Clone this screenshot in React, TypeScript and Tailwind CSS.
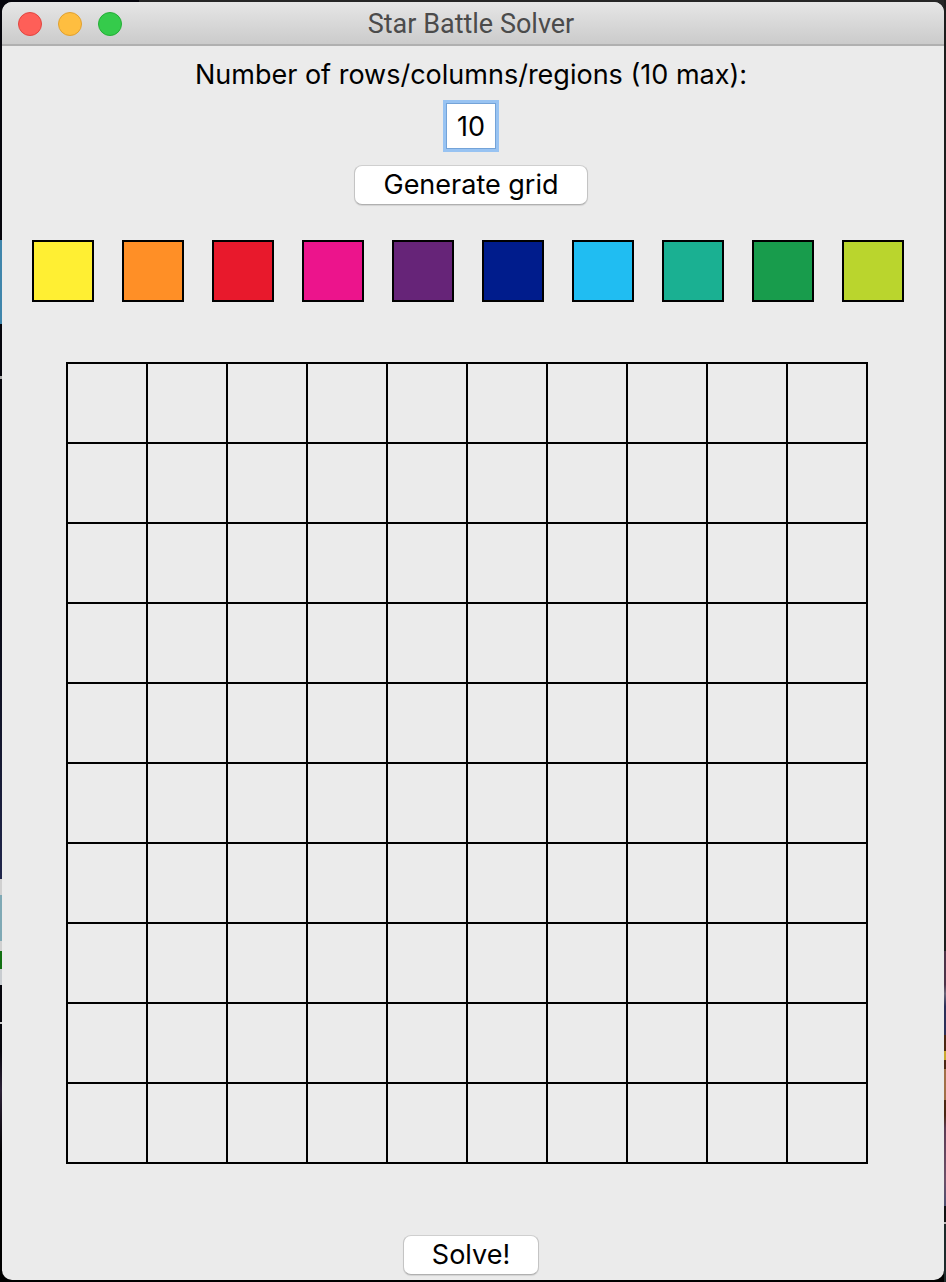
import { useState } from "react";

const SWATCHES = [
  { name: "Yellow", fill: "bg-[#ffef33]" },
  { name: "Orange", fill: "bg-[#ff8f26]" },
  { name: "Red", fill: "bg-[#e8192c]" },
  { name: "Pink", fill: "bg-[#ec148c]" },
  { name: "Purple", fill: "bg-[#662478]" },
  { name: "Navy", fill: "bg-[#001c8c]" },
  { name: "Sky", fill: "bg-[#20bdf2]" },
  { name: "Teal", fill: "bg-[#1ab092]" },
  { name: "Green", fill: "bg-[#189c4c]" },
  { name: "Lime", fill: "bg-[#bad52d]" },
];

const LIGHTS = [
  { name: "Close", look: "bg-[#fe5f58] border-[#e14640]" },
  { name: "Minimize", look: "bg-[#febe40] border-[#e0a030]" },
  { name: "Zoom", look: "bg-[#35cb4b] border-[#24ae36]" },
];

const PUSH_BUTTON =
  "h-10 cursor-default rounded-lg border border-t-[#cfcfcf] border-x-[#c4c4c4] border-b-[#b0b0b0] bg-white px-7 text-[27px] leading-9 text-black shadow-[0_1px_1px_rgba(0,0,0,0.1)]";

// Slivers of the desktop that stay visible around the window.
const DESKTOP_LEFT =
  "bg-[linear-gradient(#05050c_18.7%,#3f85ab_18.7%_25.3%,#05050c_25.3%_29.3%,#aaaaaa_29.3%_29.6%,#05050c_29.6%_45%,#20264c_68.6%,#d0d0d0_68.6%_69.8%,#7fa9b5_69.8%_73.4%,#d0d0d0_73.4%_74.2%,#127012_74.2%_75.6%,#c8ccd0_75.6%_76.8%,#05050c_76.8%_79.7%,#cccccc_79.7%_79.9%,#05050c_79.9%_82%,#2c2238_85%,#000000_90%)]";
const DESKTOP_RIGHT =
  "bg-[linear-gradient(#1c1c1c_74.2%,#4c3348_74.2%_76.8%,#686478_77.5%,#2c2f58_78.5%_80.7%,#4a2612_80.7%_82%,#c8a830_82%_82.7%,#4a2612_82.7%_83.4%,#a07048_83.4%_85.8%,#4a2612_85.8%_87%,#5c3c54_88%,#6c5068_92%,#4c5070_94.1%,#111111_94.1%_95.3%,#bbbbbb_95.3%_95.5%,#1c2a2a_95.5%)]";

function TitleBar() {
  return (
    <header className="grid h-11 grid-cols-[1fr_auto_1fr] items-center border-b-2 border-[#b0b0b0] bg-linear-to-b from-[#e6e6e6] to-[#cbcbcb] pt-0.5 pr-5 pl-4">
      <div className="flex gap-4">
        {LIGHTS.map((light) => (
          <button
            key={light.name}
            type="button"
            aria-label={light.name}
            className={`size-6 rounded-full border ${light.look}`}
          />
        ))}
      </div>
      <h1 className="font-[Roboto,sans-serif] text-[27px] leading-9 text-[#4b4b4b]">Star Battle Solver</h1>
    </header>
  );
}

function Board({ size }: { size: number }) {
  const [marks, setMarks] = useState<Record<number, string>>({});
  return (
    <div
      className="grid border-t-2 border-l-2 border-black"
      style={{ gridTemplateColumns: `repeat(${size}, minmax(0, 1fr))` }}
    >
      {Array.from({ length: size * size }, (_, i) => (
        <button
          key={i}
          type="button"
          aria-label={`Row ${Math.floor(i / size) + 1}, column ${(i % size) + 1}`}
          onClick={() => setMarks({ ...marks, [i]: marks[i] ? "" : "bg-[#ffef33]" })}
          className={`aspect-square border-r-2 border-b-2 border-black ${marks[i] ?? ""}`}
        />
      ))}
    </div>
  );
}

export default function App() {
  const [count, setCount] = useState("10");
  const [size, setSize] = useState(10);

  return (
    <div className="grid min-h-screen grid-cols-[2px_minmax(0,1fr)_2px] bg-[#0a0a0c]">
      <div className={DESKTOP_LEFT} />
      <div className="bg-[linear-gradient(90deg,#05050c_14.5%,#262626_14.5%)]">
        <div className="bg-linear-to-b from-transparent from-50% to-black to-50% py-0.5">
          <main className="overflow-hidden rounded-[10px] bg-[#ebebeb] pb-[5px] font-[Inter,sans-serif] text-black">
            <TitleBar />
            <form
              className="flex flex-col items-center pt-[11px] pr-1"
              onSubmit={(e) => {
                e.preventDefault();
                setSize(Math.min(10, Math.max(1, Number(count) || 1)));
              }}
            >
              <label htmlFor="count" className="text-[27px] leading-9">
                Number of rows/columns/regions (10 max):
              </label>
              <input
                id="count"
                type="text"
                value={count}
                onChange={(e) => setCount(e.target.value)}
                className="mt-[10px] h-[46px] w-[50px] border border-[#74a3d8] bg-white text-center text-[27px] leading-9 ring-3 ring-[#98c3f2] outline-none"
              />
              <button type="submit" className={`mt-4 ${PUSH_BUTTON}`}>
                Generate grid
              </button>
            </form>
            <div className="mt-[35px] flex justify-between pr-10 pl-[30px]">
              {SWATCHES.map((swatch) => (
                <button
                  key={swatch.name}
                  type="button"
                  aria-label={swatch.name}
                  className={`size-[62px] border-2 border-black ${swatch.fill}`}
                />
              ))}
            </div>
            <div className="mt-[60px] pr-[76px] pl-16">
              <Board size={size} />
            </div>
            <div className="mt-[71px] flex justify-center pr-1">
              <button type="button" className={PUSH_BUTTON}>
                Solve!
              </button>
            </div>
          </main>
        </div>
      </div>
      <div className={DESKTOP_RIGHT} />
    </div>
  );
}
